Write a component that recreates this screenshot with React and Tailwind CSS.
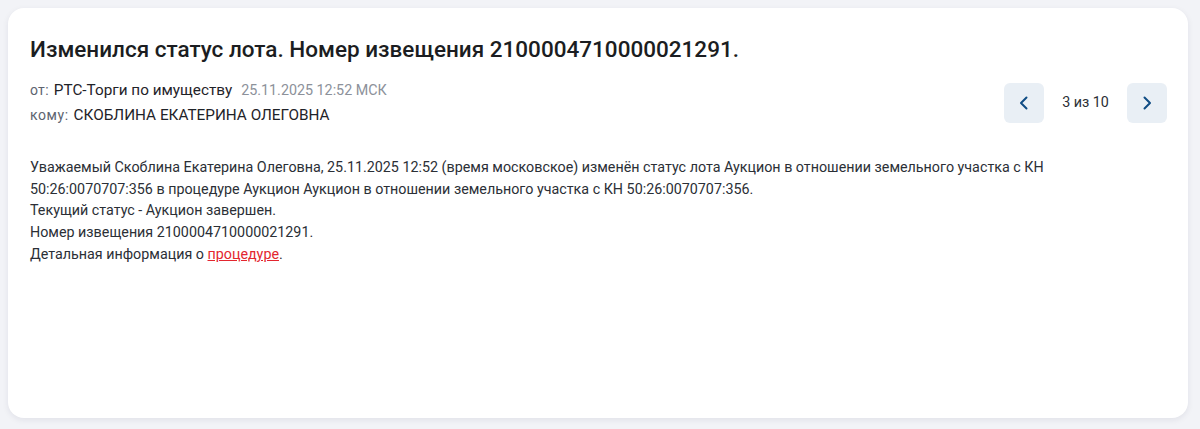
import React from 'react';

const Chevron = ({ dir }) => (
  <svg width="16" height="16" viewBox="0 0 16 16" fill="none">
    <path
      d={dir === 'left' ? 'M10.5 2.5 5 8l5.5 5.5' : 'M5.5 2.5 11 8l-5.5 5.5'}
      stroke="#0f4c84"
      strokeWidth="2"
      strokeLinecap="round"
      strokeLinejoin="round"
    />
  </svg>
);

const App = () => {
  return (
    <div className="min-h-screen bg-[#f2f3f7] py-2 pl-2 pr-3 font-['Roboto',sans-serif]">
      <div className="h-[410px] rounded-2xl bg-white pl-[22px] pr-[21px] pt-[27px] shadow-[0_2px_6px_rgba(20,30,60,0.08)]">
        <h1 className="text-[22.5px] font-medium leading-7 text-[#1b1d21]">
          Изменился статус лота. Номер извещения 2100004710000021291.
        </h1>
        <div className="mt-[16px] flex items-start justify-between">
          <div className="flex flex-col gap-[2px]">
            <div className="flex items-baseline gap-[5px]">
              <span className="text-[14px] tracking-[0.02em] text-[#5d6470]">от:</span>
              <span className="text-[15.3px] text-[#1f2329]">РТС-Торги по имуществу</span>
              <span className="ml-1 text-[14.3px] text-[#8c919a]">25.11.2025 12:52 МСК</span>
            </div>
            <div className="flex items-baseline gap-[5px]">
              <span className="text-[14px] tracking-[0.04em] text-[#5d6470]">кому:</span>
              <span className="text-[15.3px] text-[#1f2329]">СКОБЛИНА ЕКАТЕРИНА ОЛЕГОВНА</span>
            </div>
          </div>
          <div className="mt-[4px] flex items-center">
            <button className="flex h-10 w-10 items-center justify-center rounded-md bg-[#e9eff5]">
              <Chevron dir="left" />
            </button>
            <span className="w-[83px] text-center text-[14.3px] text-[#2b2f36]">3 из 10</span>
            <button className="flex h-10 w-10 items-center justify-center rounded-md bg-[#e9eff5]">
              <Chevron dir="right" />
            </button>
          </div>
        </div>
        <div className="mt-[30px] max-w-[1040px] text-[14.3px] leading-[21.8px] text-[#2b2f36]">
          <p>
            Уважаемый Скоблина Екатерина Олеговна, 25.11.2025 12:52 (время московское) изменён статус лота Аукцион в отношении земельного участка с КН 50:26:0070707:356 в процедуре Аукцион Аукцион в отношении земельного участка с КН 50:26:0070707:356.
          </p>
          <p>Текущий статус - Аукцион завершен.</p>
          <p>Номер извещения 2100004710000021291.</p>
          <p>
            Детальная информация о{' '}
            <a href="#" className="text-[#e3262f] underline">процедуре</a>.
          </p>
        </div>
      </div>
    </div>
  );
};

export default App;
